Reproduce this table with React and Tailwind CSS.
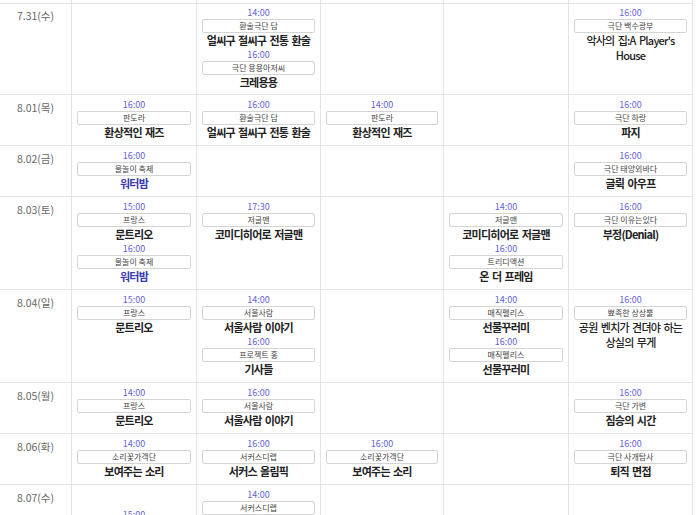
import React from "react";

const P = "purple";
const M = "medium";

const rows = [
  {
    date: "7.31(수)",
    first: true,
    cells: [
      [],
      [
        ["14:00", "환술극단 담", "얼씨구 절씨구 전통 환술"],
        ["16:00", "극단 용용아저씨", "크레용용"],
      ],
      [],
      [],
      [["16:00", "극단 백수광부", "악사의 집:A Player's House", M]],
    ],
  },
  {
    date: "8.01(목)",
    cells: [
      [["16:00", "판도라", "환상적인 재즈"]],
      [["16:00", "환술극단 담", "얼씨구 절씨구 전통 환술"]],
      [["14:00", "판도라", "환상적인 재즈"]],
      [],
      [["16:00", "극단 하랑", "파지"]],
    ],
  },
  {
    date: "8.02(금)",
    cells: [
      [["16:00", "물놀이 축제", "워터밤", P]],
      [],
      [],
      [],
      [["16:00", "극단 태양외바다", "글뤽 아우프"]],
    ],
  },
  {
    date: "8.03(토)",
    cells: [
      [
        ["15:00", "프랑스", "문트리오"],
        ["16:00", "물놀이 축제", "워터밤", P],
      ],
      [["17:30", "저글맨", "코미디히어로 저글맨"]],
      [],
      [
        ["14:00", "저글맨", "코미디히어로 저글맨"],
        ["16:00", "트리디액션", "온 더 프레임"],
      ],
      [["16:00", "극단 이유는있다", "부정(Denial)"]],
    ],
  },
  {
    date: "8.04(일)",
    cells: [
      [["15:00", "프랑스", "문트리오"]],
      [
        ["14:00", "서울사람", "서울사람 이야기"],
        ["16:00", "프로젝트 홍", "기사들"],
      ],
      [],
      [
        ["14:00", "매직펠리스", "선물꾸러미"],
        ["16:00", "매직펠리스", "선물꾸러미"],
      ],
      [["16:00", "뾰족한 상상뿔", "공원 벤치가 견뎌야 하는 상실의 무게", M]],
    ],
  },
  {
    date: "8.05(월)",
    cells: [
      [["14:00", "프랑스", "문트리오"]],
      [["16:00", "서울사람", "서울사람 이야기"]],
      [],
      [],
      [["16:00", "극단 가변", "짐승의 시간"]],
    ],
  },
  {
    date: "8.06(화)",
    cells: [
      [["14:00", "소리꽃가객단", "보여주는 소리"]],
      [["16:00", "서커스디랩", "서커스 올림픽"]],
      [["16:00", "소리꽃가객단", "보여주는 소리"]],
      [],
      [["16:00", "극단 사개탐사", "퇴직 면접"]],
    ],
  },
  {
    date: "8.07(수)",
    cells: [
      [["15:00", "프랑스", "문트리오"]],
      [
        ["14:00", "서커스디랩", "서커스 올림픽"],
        ["16:00", "서커스디랩", "서커스 올림픽"],
      ],
      [],
      [],
      [],
    ],
    offsetFirst: true,
  },
];

function Entry({ e }) {
  const [time, troupe, title, kind] = e;
  const titleCls =
    kind === P
      ? "text-[#3a3ab0] font-bold"
      : kind === M
      ? "text-[#222] font-medium"
      : "text-[#222] font-bold";
  return (
    <div className="flex flex-col items-stretch">
      <div className="text-center text-[9px] leading-[13px] text-[#6363d9]">{time}</div>
      <div className="flex h-[14px] items-center justify-center rounded-[2px] border border-[#d4d4d4] text-[8px] leading-none text-[#444]">
        {troupe}
      </div>
      <div
        className={
          "text-center text-[11px] leading-[15px] tracking-[-0.75px] [word-spacing:1.5px] break-keep " +
          titleCls
        }
      >
        {title}
      </div>
    </div>
  );
}

export default function App() {
  return (
    <div className="h-[515px] w-[700px] overflow-hidden bg-white font-['Noto_Sans_CJK_KR',sans-serif]">
      <div className="grid w-fit grid-cols-[71px_124px_123px_122px_124px_123px] gap-px bg-[#e4e4e4] pr-px">
        {[0, 1, 2, 3, 4, 5].map((i) => (
          <div key={"top" + i} className="h-[3px] bg-white" />
        ))}
        {rows.map((r) => (
          <React.Fragment key={r.date}>
            <div
              className={
                "bg-white text-center text-[10.5px] text-[#666] " +
                (r.first ? "pt-[4px]" : "pt-[5px]")
              }
            >
              {r.date}
            </div>
            {r.cells.map((c, ci) => (
              <div
                key={ci}
                className={
                  "flex flex-col bg-white px-[5px] " +
                  (r.first
                    ? "pt-[2px] pb-[4px]"
                    : r.offsetFirst && ci === 0
                    ? "pt-[23px] pb-[5px]"
                    : "pt-[3px] pb-[5px]")
                }
              >
                {c.map((e, ei) => (
                  <Entry key={ei} e={e} />
                ))}
              </div>
            ))}
          </React.Fragment>
        ))}
      </div>
    </div>
  );
}
